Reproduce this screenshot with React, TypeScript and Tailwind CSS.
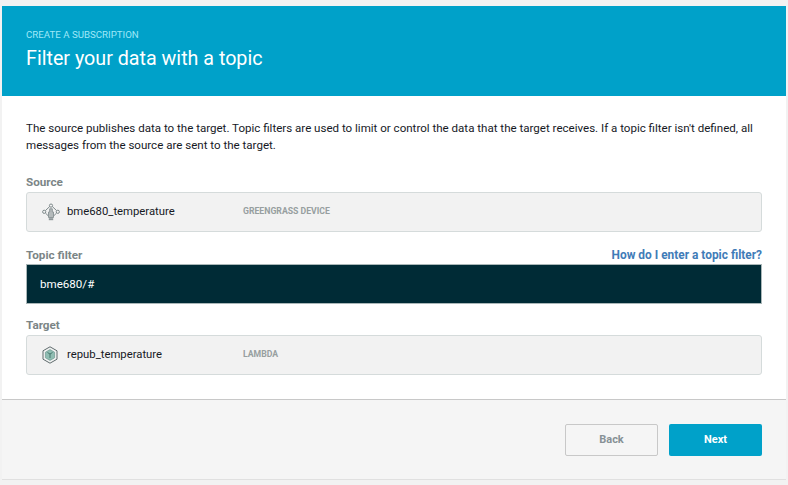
import React from "react";

const DeviceIcon = () => (
  <svg width="18" height="18" viewBox="0 0 18 18" fill="none" stroke="#7f8a8c" strokeWidth="1">
    <circle cx="9" cy="2.6" r="1.6" />
    <circle cx="2.2" cy="8.8" r="1.6" />
    <circle cx="15.8" cy="8.8" r="1.6" />
    <path d="M7.6 3.6 3.4 7.6M10.4 3.6l4.2 4M3.4 10l3.4 3.4M14.6 10l-3.4 3.4" />
    <path d="M6.5 9h1.2V5.8h2.6V9h1.2v5.5h-5z" fill="#b4babb" stroke="#8e9799" />
    <path d="M6.8 15.2h4.4v2H6.8z" fill="#8e9799" stroke="none" />
  </svg>
);

const LambdaIcon = () => (
  <svg width="16" height="18" viewBox="0 0 16 18" fill="none">
    <path d="M8 .8 15 4.8v8.4L8 17.2 1 13.2V4.8z" stroke="#5f6b6d" strokeWidth="1" />
    <path d="M8 3.6 12.6 6.2v5.6L8 14.4l-4.6-2.6V6.2z" fill="#8fbdb2" stroke="#6f9a91" strokeWidth=".7" />
    <path d="M5.5 6.5 8 8l2.5-1.5M8 8v4" stroke="#3f6f68" strokeWidth=".9" />
  </svg>
);

const Row = ({ icon, name, kind }: { icon: React.ReactNode; name: string; kind: string }) => (
  <div className="flex h-10 items-center rounded-[3px] border border-[#d5dbdb] bg-[#f2f2f2] pl-[15px]">
    <div className="flex w-[25px] shrink-0 items-center">{icon}</div>
    <div className="w-[176px] shrink-0 text-[11.3px] text-[#16191f]">{name}</div>
    <div className="text-[8.7px] font-bold text-[#979fa0]">{kind}</div>
  </div>
);

export default function App() {
  return (
    <div className="min-h-[485px] bg-[#f2f2f2] px-[2px] pt-[6px] font-['Roboto',sans-serif]">
      <div className="border-b border-[#e0e0e0] bg-white">
        <div className="h-[90px] bg-[#00a1c9] px-6 pt-[22px]">
          <div className="text-[9.7px] leading-[13px] text-[#9fe8f8]">CREATE A SUBSCRIPTION</div>
          <h1 className="mt-[5px] text-[19.7px] leading-[26px] text-white">Filter your data with a topic</h1>
        </div>

        <div className="px-6 pb-6 pt-[24px]">
          <p className="text-[11.55px] leading-[17px] text-[#16191f]">
            The source publishes data to the target. Topic filters are used to limit or control the data that the target receives. If a topic filter isn't defined, all messages from the source are sent to the target.
          </p>

          <div className="mt-[20px] text-[11.7px] font-bold leading-[16px] text-[#7b8586]">Source</div>
          <div className="mt-[2px]">
            <Row icon={<DeviceIcon />} name="bme680_temperature" kind="GREENGRASS DEVICE" />
          </div>

          <div className="mt-[15px] flex items-end justify-between leading-[16px]">
            <span className="text-[11.7px] font-bold text-[#7b8586]">Topic filter</span>
            <a className="text-[11.9px] font-bold text-[#3f7cb8]">How do I enter a topic filter?</a>
          </div>
          <div className="mt-[1px] flex h-10 items-center border border-[#aab7b8] bg-[#002b36] pl-[13px] pt-[1px] text-[11.6px] text-white">
            bme680/#
          </div>

          <div className="mt-[13px] text-[11.7px] font-bold leading-[16px] text-[#7b8586]">Target</div>
          <div className="mt-[2px]">
            <Row icon={<LambdaIcon />} name="repub_temperature" kind="LAMBDA" />
          </div>
        </div>

        <div className="flex h-[80px] items-start justify-end gap-[11px] border-t border-[#c8c8c8] bg-[#f5f5f5] px-6 pt-6">
          <button className="h-8 w-[93px] rounded-[2px] border border-[#c8c8c8] pt-[1px] text-[11px] font-bold text-[#879196]">Back</button>
          <button className="h-8 w-[93px] rounded-[2px] bg-[#00a1c9] pt-[1px] text-[11px] font-bold text-white">Next</button>
        </div>
      </div>
    </div>
  );
}
